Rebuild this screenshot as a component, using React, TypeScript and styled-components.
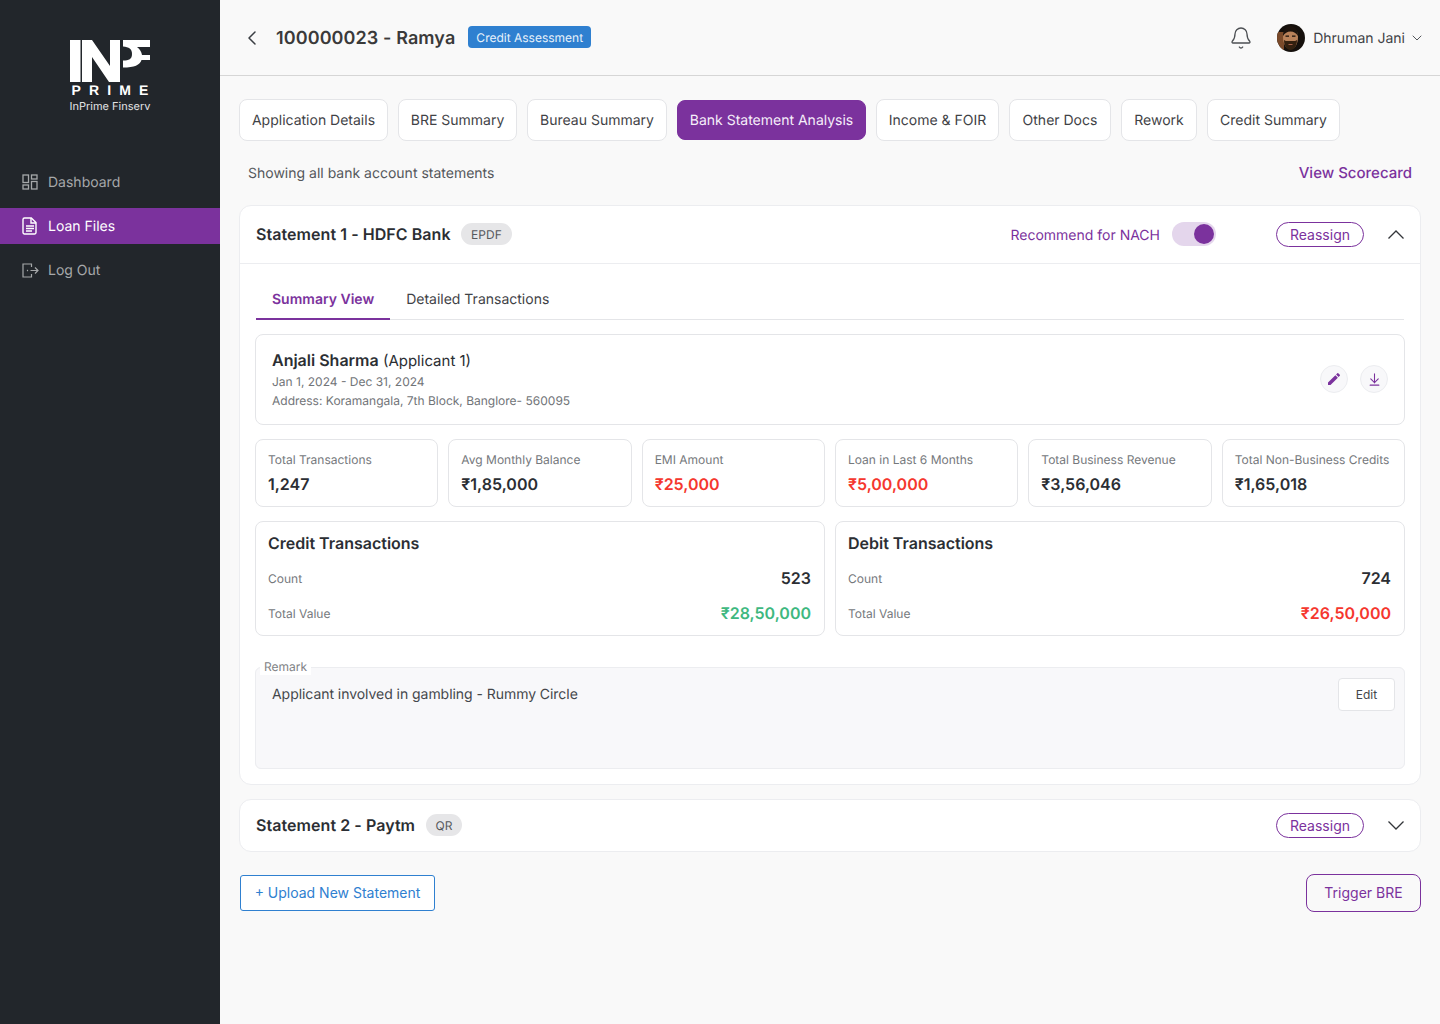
import styled, { createGlobalStyle } from "styled-components";
import { ArrowDownToLine, Bell, ChevronDown, ChevronLeft } from "lucide-react";
import { MdEdit } from "react-icons/md";

const Global = createGlobalStyle`
  * { box-sizing: border-box; }
  html, body { margin: 0; padding: 0; }
  body {
    font-family: Inter, "Noto Sans", sans-serif;
    background: #f9f9f9;
    color: #22262b;
    text-rendering: geometricPrecision;
  }
`;

const Page = styled.div`
  display: flex;
  min-height: 1024px;
`;

const Sidebar = styled.aside`
  width: 220px;
  flex-shrink: 0;
  background: #22262b;
  display: flex;
  flex-direction: column;
`;

const LogoBox = styled.div`
  height: 164px;
  padding-top: 40px;
  display: flex;
  flex-direction: column;
  align-items: center;
  color: #fff;
`;

const LogoPrime = styled.div`
  font-size: 14px;
  line-height: 14px;
  font-weight: 700;
  letter-spacing: 8.1px;
  margin-right: -8px;
  margin-top: 1px;
  font-family: "Liberation Sans", sans-serif;
`;

const LogoName = styled.div`
  font-size: 11px;
  line-height: 14px;
  margin-top: 2px;
  color: #e2e3e5;
`;

const Nav = styled.nav`
  display: flex;
  flex-direction: column;
  gap: 8px;
`;

const NavItem = styled.div<{ $active?: boolean }>`
  height: 36px;
  display: flex;
  align-items: center;
  font-size: 14px;
  color: ${(p) => (p.$active ? "#fff" : "#a6a8aa")};
  background: ${(p) => (p.$active ? "#7b329d" : "transparent")};
`;

const NavIconSlot = styled.span`
  width: 48px;
  display: flex;
  justify-content: center;
  padding-left: 12px;
`;

const Main = styled.main`
  flex: 1;
  min-width: 0;
`;

const Header = styled.header`
  height: 76px;
  border-bottom: 1px solid #d6d6d6;
  display: flex;
  align-items: center;
  padding: 0 15px 0 20px;
`;

const BackBtn = styled.div`
  width: 36px;
  display: flex;
  color: #3a3e43;
`;

const PageTitle = styled.h1`
  margin: 2px 0 0;
  font-size: 18px;
  font-weight: 600;
  letter-spacing: 0.1px;
  color: #3a3a3a;
`;

const StageBadge = styled.span`
  margin: 0 0 1px 13px;
  height: 22px;
  padding: 0 8px;
  display: flex;
  align-items: center;
  background: #2f80d0;
  border-radius: 4px;
  color: #e8f2fb;
  font-size: 12px;
`;

const HeaderRight = styled.div`
  margin-left: auto;
  display: flex;
  align-items: center;
`;

const BellWrap = styled.div`
  display: flex;
  color: #4c4f53;
  margin-right: 24px;
`;

const Avatar = styled.svg`
  width: 28px;
  height: 28px;
  border-radius: 50%;
  margin-right: 8px;
`;

const UserName = styled.span`
  font-size: 14px;
  color: #3f4246;
  margin: 2px 4px 0 0;
`;

const Content = styled.div`
  padding: 23px 19px 0;
`;

const TabBar = styled.div`
  display: flex;
  align-items: center;
  gap: 10px;
`;

const PageTab = styled.div<{ $active?: boolean; $width: number }>`
  width: ${(p) => p.$width}px;
  height: ${(p) => (p.$active ? "40px" : "42px")};
  display: flex;
  align-items: center;
  justify-content: center;
  font-size: 14px;
  border-radius: 8px;
  border: 1px solid ${(p) => (p.$active ? "#7b329d" : "#e4e5e8")};
  background: ${(p) => (p.$active ? "#7b329d" : "#fff")};
  color: ${(p) => (p.$active ? "#f6eefa" : "#3f4246")};
`;

const ShowingRow = styled.div`
  height: 64px;
  display: flex;
  align-items: center;
  justify-content: space-between;
  padding: 0 9px;
  font-size: 14px;
  color: #54575b;
`;

const ScorecardLink = styled.a`
  font-size: 15px;
  font-weight: 500;
  padding-bottom: 2px;
  color: #7b329d;
`;

const Card = styled.section`
  background: #fff;
  border: 1px solid #ecedf0;
  border-radius: 12px;
`;

const StatementHead = styled.div<{ $open?: boolean }>`
  height: ${(p) => (p.$open ? "58px" : "51px")};
  display: flex;
  align-items: center;
  padding: 0 16px 1px;
  ${(p) => (p.$open ? "border-bottom: 1px solid #ecedf0;" : "")}
`;

const StatementTitle = styled.h2`
  margin: 0;
  font-size: 16px;
  font-weight: 600;
  letter-spacing: 0.06px;
  color: #2b2e33;
`;

const TypeChip = styled.span`
  margin-left: 10.5px;
  height: 22px;
  padding: 0 10px;
  display: flex;
  align-items: center;
  background: #e6e6e8;
  border-radius: 11px;
  font-size: 12px;
  color: #55585c;
`;

const NachLabel = styled.span`
  margin: 2px 0 0 auto;
  font-size: 14px;
  color: #7b329d;
`;

const Switch = styled.div`
  margin-left: 12px;
  width: 44px;
  height: 24px;
  border-radius: 12px;
  background: #e4d6ec;
  display: flex;
  align-items: center;
  justify-content: flex-end;
  padding-right: 2px;
`;

const Knob = styled.div`
  width: 20px;
  height: 20px;
  border-radius: 50%;
  background: #7b329d;
`;

const ReassignBtn = styled.button<{ $auto?: boolean }>`
  margin-left: ${(p) => (p.$auto ? "auto" : "60px")};
  width: 88px;
  height: 25px;
  padding: 0;
  border: 1px solid #7b329d;
  border-radius: 13px;
  background: #fff;
  color: #7b329d;
  font: 400 14px Inter, sans-serif;
`;

const Chevron = styled.svg`
  margin-left: 24px;
  width: 16px;
  height: 9px;
  fill: none;
  stroke: #33363a;
  stroke-width: 1.3;
`;

const StatementBody = styled.div`
  padding: 16px 15px 15px;
`;

const SubTabs = styled.div`
  display: flex;
  height: 40px;
  margin: 0 1px;
  border-bottom: 1px solid #e4e5e8;
`;

const SubTab = styled.div<{ $active?: boolean }>`
  height: 40px;
  padding: 0 16px;
  display: flex;
  align-items: center;
  font-size: 14px;
  font-weight: ${(p) => (p.$active ? 600 : 400)};
  color: ${(p) => (p.$active ? "#7b329d" : "#3f4246")};
  border-bottom: 2px solid ${(p) => (p.$active ? "#7b329d" : "transparent")};
`;

const ApplicantCard = styled.div`
  margin-top: 14px;
  height: 91px;
  border: 1px solid #e4e5e8;
  border-radius: 8px;
  padding: 15px 16px 0;
  display: flex;
  justify-content: space-between;
`;

const ApplicantName = styled.div`
  font-size: 15px;
  line-height: 20px;
  margin-bottom: 1px;
  color: #2b2e33;
  b { font-size: 16px; font-weight: 600; }
`;

const ApplicantMeta = styled.div`
  font-size: 12px;
  line-height: 19px;
  color: #717478;
`;

const ActionGroup = styled.div`
  display: flex;
  gap: 12px;
  padding-top: 15px;
`;

const RoundBtn = styled.div`
  width: 28px;
  height: 28px;
  border-radius: 50%;
  background: #f8f8fa;
  border: 1px solid #ecedf0;
  display: flex;
  align-items: center;
  justify-content: center;
  color: #7b329d;
`;

const KpiGrid = styled.div`
  margin-top: 14px;
  display: grid;
  grid-template-columns: repeat(6, 1fr);
  gap: 10px;
`;

const KpiCard = styled.div`
  height: 68px;
  border: 1px solid #e4e5e8;
  border-radius: 8px;
  padding: 12px 12px 0;
`;

const KpiLabel = styled.div`
  font-size: 12px;
  line-height: 16px;
  color: #75787c;
  white-space: nowrap;
`;

const KpiValue = styled.div<{ $color?: string }>`
  margin-top: 5px;
  font-size: 16px;
  line-height: 22px;
  font-weight: 600;
  color: ${(p) => p.$color || "#2b2e33"};
`;

const TxnGrid = styled.div`
  margin-top: 14px;
  display: grid;
  grid-template-columns: 1fr 1fr;
  gap: 10px;
`;

const TxnCard = styled.div`
  height: 115px;
  border: 1px solid #e4e5e8;
  border-radius: 8px;
  padding: 10px 13px 0 12px;
`;

const TxnTitle = styled.h3`
  margin: 0 0 7px;
  font-size: 16px;
  line-height: 22px;
  font-weight: 600;
  color: #2b2e33;
`;

const TxnRow = styled.div`
  height: 35px;
  display: flex;
  align-items: center;
  justify-content: space-between;
`;

const TxnLabel = styled.span`
  font-size: 12px;
  color: #75787c;
`;

const TxnValue = styled.span<{ $color?: string }>`
  font-size: 16px;
  font-weight: 600;
  padding-bottom: 2px;
  color: ${(p) => p.$color || "#2b2e33"};
`;

const RemarkBox = styled.fieldset`
  margin: 23px 0 0;
  height: 110px;
  padding: 0 9px 0 16px;
  border: 1px solid #ecedf0;
  border-radius: 6px;
  background: #f8f8fa;
  min-width: 0;
`;

const RemarkLegend = styled.legend`
  margin-left: -12px;
  padding: 0 4px;
  font-size: 12px;
  line-height: 16px;
  color: #808285;
  background: #fff;
`;

const RemarkRow = styled.div`
  display: flex;
  justify-content: space-between;
  align-items: flex-start;
`;

const RemarkText = styled.div`
  font-size: 14px;
  line-height: 20px;
  letter-spacing: -0.05px;
  color: #44474b;
  margin-top: 10px;
`;

const EditBtn = styled.button`
  margin-top: 3px;
  width: 57px;
  height: 33px;
  padding: 0;
  background: #fff;
  border: 1px solid #e4e5e8;
  border-radius: 4px;
  color: #44474b;
  font: 400 12px Inter, sans-serif;
`;

const StatementTwo = styled(Card)`
  margin-top: 14px;
`;

const Footer = styled.div`
  margin-top: 22px;
  display: flex;
  align-items: center;
  justify-content: space-between;
`;

const UploadBtn = styled.button`
  width: 195px;
  height: 36px;
  margin-left: 1px;
  padding: 0 0 2px;
  background: #fff;
  border: 1px solid #2f80d0;
  border-radius: 3px;
  color: #2f80d0;
  font: 400 14px Inter, sans-serif;
`;

const TriggerBtn = styled.button`
  width: 115px;
  height: 38px;
  padding: 0 0 2px;
  background: transparent;
  border: 1px solid #7b329d;
  border-radius: 8px;
  color: #7b329d;
  font: 400 14px Inter, sans-serif;
`;

const pageTabs = [
  { label: "Application Details", width: 149 },
  { label: "BRE Summary", width: 119 },
  { label: "Bureau Summary", width: 140 },
  { label: "Bank Statement Analysis", width: 189 },
  { label: "Income & FOIR", width: 123 },
  { label: "Other Docs", width: 102 },
  { label: "Rework", width: 76 },
  { label: "Credit Summary", width: 133 },
];

const kpis = [
  { label: "Total Transactions", value: "1,247" },
  { label: "Avg Monthly Balance", value: "₹1,85,000" },
  { label: "EMI Amount", value: "₹25,000", color: "#f5372e" },
  { label: "Loan in Last 6 Months", value: "₹5,00,000", color: "#f5372e" },
  { label: "Total Business Revenue", value: "₹3,56,046" },
  { label: "Total Non-Business Credits", value: "₹1,65,018" },
];

const txns = [
  { title: "Credit Transactions", count: "523", total: "₹28,50,000", color: "#3eb87f" },
  { title: "Debit Transactions", count: "724", total: "₹26,50,000", color: "#f5372e" },
];

function LogoMark() {
  return (
    <svg width="80" height="42" viewBox="0 0 80 42" fill="#fff">
      <rect x="0" y="0" width="10.5" height="42" />
      <path d="M12 0h10l18 26V0h10v42H39L22 17v25H12z" />
      <path d="M53 0h27v7H67c3 2 4.500 5 5 8h8v5H71.500c-1.500 5-7 7.500-18.500 7.500v-7c6 0 9-1.500 9-6.500s-3-7-9-7.500z" />
    </svg>
  );
}

function DashboardIcon() {
  return (
    <svg width="16" height="16" viewBox="0 0 16 16" fill="none" stroke="currentColor" strokeWidth="1.3">
      <rect x="1" y="1" width="5.5" height="7.5" />
      <rect x="9.5" y="1" width="5.5" height="4" />
      <rect x="1" y="11" width="5.5" height="4" />
      <rect x="9.5" y="7.5" width="5.5" height="7.5" />
    </svg>
  );
}

function FileIcon() {
  return (
    <svg width="16" height="18" viewBox="0 0 16 18" fill="none" stroke="#fff" strokeWidth="1.4">
      <path d="M2.5 1h6.8L14 5.6V15.5a1.5 1.5 0 0 1-1.5 1.5h-10A1.5 1.5 0 0 1 1 15.5v-13A1.5 1.5 0 0 1 2.5 1z" />
      <path d="M9 1v5h5" />
      <path d="M4 9h8M4 11.5h8M4 14h6" />
    </svg>
  );
}

function LogOutIcon() {
  return (
    <svg width="17" height="15" viewBox="0 0 17 15" fill="none" stroke="currentColor" strokeWidth="1.2">
      <path d="M9.5 4V1H1v13h8.5v-3" />
      <path d="M8.5 7.5h7.5M13 4.5l3 3-3 3" />
      <path d="M5.5 6.8v1.4" />
    </svg>
  );
}

function UserAvatar() {
  return (
    <Avatar viewBox="0 0 28 28">
      <rect width="28" height="28" fill="#15100c" />
      <path d="M0 8h7v20H0z" fill="#7a4a2a" />
      <path d="M6 13c0-6 3-9 7.5-9S21 7 21 13c0 7-3 12-7.500 12S6 20 6 13z" fill="#b9825a" />
      <path d="M6 12c0-6 3-10 7.500-10S21 6 21 12c-2-3-4-4.500-7.500-4.500S8 9 6 12z" fill="#1c130d" />
      <path d="M7 16c2 1.500 4 1 6.500 1s4.500.5 6.500-1c0 6-3 10-6.500 10S7 22 7 16z" fill="#33200f" />
      <rect x="8.500" y="11.500" width="3.500" height="1.300" fill="#1f140d" />
      <rect x="15" y="11.500" width="3.500" height="1.300" fill="#1f140d" />
      <rect x="11.500" y="20" width="4" height="1" fill="#a8604a" />
    </Avatar>
  );
}

function Statement1Body() {
  return (
    <StatementBody>
      <SubTabs>
        <SubTab $active>Summary View</SubTab>
        <SubTab>Detailed Transactions</SubTab>
      </SubTabs>

      <ApplicantCard>
        <div>
          <ApplicantName>
            <b>Anjali Sharma</b> (Applicant 1)
          </ApplicantName>
          <ApplicantMeta>Jan 1, 2024 - Dec 31, 2024</ApplicantMeta>
          <ApplicantMeta>Address: Koramangala, 7th Block, Banglore- 560095</ApplicantMeta>
        </div>
        <ActionGroup>
          <RoundBtn>
            <MdEdit size={16} />
          </RoundBtn>
          <RoundBtn>
            <ArrowDownToLine size={15} strokeWidth={1.7} />
          </RoundBtn>
        </ActionGroup>
      </ApplicantCard>

      <KpiGrid>
        {kpis.map((kpi) => (
          <KpiCard key={kpi.label}>
            <KpiLabel>{kpi.label}</KpiLabel>
            <KpiValue $color={kpi.color}>{kpi.value}</KpiValue>
          </KpiCard>
        ))}
      </KpiGrid>

      <TxnGrid>
        {txns.map((txn) => (
          <TxnCard key={txn.title}>
            <TxnTitle>{txn.title}</TxnTitle>
            <TxnRow>
              <TxnLabel>Count</TxnLabel>
              <TxnValue>{txn.count}</TxnValue>
            </TxnRow>
            <TxnRow>
              <TxnLabel>Total Value</TxnLabel>
              <TxnValue $color={txn.color}>{txn.total}</TxnValue>
            </TxnRow>
          </TxnCard>
        ))}
      </TxnGrid>

      <RemarkBox>
        <RemarkLegend>Remark</RemarkLegend>
        <RemarkRow>
          <RemarkText>Applicant involved in gambling - Rummy Circle</RemarkText>
          <EditBtn>Edit</EditBtn>
        </RemarkRow>
      </RemarkBox>
    </StatementBody>
  );
}

export default function App() {
  return (
    <Page>
      <Global />
      <Sidebar>
        <LogoBox>
          <LogoMark />
          <LogoPrime>PRIME</LogoPrime>
          <LogoName>InPrime Finserv</LogoName>
        </LogoBox>
        <Nav>
          <NavItem>
            <NavIconSlot>
              <DashboardIcon />
            </NavIconSlot>
            Dashboard
          </NavItem>
          <NavItem $active>
            <NavIconSlot>
              <FileIcon />
            </NavIconSlot>
            Loan Files
          </NavItem>
          <NavItem>
            <NavIconSlot>
              <LogOutIcon />
            </NavIconSlot>
            Log Out
          </NavItem>
        </Nav>
      </Sidebar>

      <Main>
        <Header>
          <BackBtn>
            <ChevronLeft size={24} strokeWidth={1.5} />
          </BackBtn>
          <PageTitle>100000023 - Ramya</PageTitle>
          <StageBadge>Credit Assessment</StageBadge>
          <HeaderRight>
            <BellWrap>
              <Bell size={24} strokeWidth={1.3} />
            </BellWrap>
            <UserAvatar />
            <UserName>Dhruman Jani</UserName>
            <ChevronDown size={16} strokeWidth={1.5} color="#55585c" />
          </HeaderRight>
        </Header>

        <Content>
          <TabBar>
            {pageTabs.map((tab) => (
              <PageTab key={tab.label} $width={tab.width} $active={tab.label === "Bank Statement Analysis"}>
                {tab.label}
              </PageTab>
            ))}
          </TabBar>

          <ShowingRow>
            <span>Showing all bank account statements</span>
            <ScorecardLink>View Scorecard</ScorecardLink>
          </ShowingRow>

          <Card>
            <StatementHead $open>
              <StatementTitle>Statement 1 - HDFC Bank</StatementTitle>
              <TypeChip>EPDF</TypeChip>
              <NachLabel>Recommend for NACH</NachLabel>
              <Switch>
                <Knob />
              </Switch>
              <ReassignBtn>Reassign</ReassignBtn>
              <Chevron viewBox="0 0 16 9">
                <path d="M.5 8.500L8 1l7.500 7.500" />
              </Chevron>
            </StatementHead>
            <Statement1Body />
          </Card>

          <StatementTwo>
            <StatementHead>
              <StatementTitle>Statement 2 - Paytm</StatementTitle>
              <TypeChip>QR</TypeChip>
              <ReassignBtn $auto>Reassign</ReassignBtn>
              <Chevron viewBox="0 0 16 9">
                <path d="M.5.500L8 8l7.500-7.500" />
              </Chevron>
            </StatementHead>
          </StatementTwo>

          <Footer>
            <UploadBtn>+ Upload New Statement</UploadBtn>
            <TriggerBtn>Trigger BRE</TriggerBtn>
          </Footer>
        </Content>
      </Main>
    </Page>
  );
}
